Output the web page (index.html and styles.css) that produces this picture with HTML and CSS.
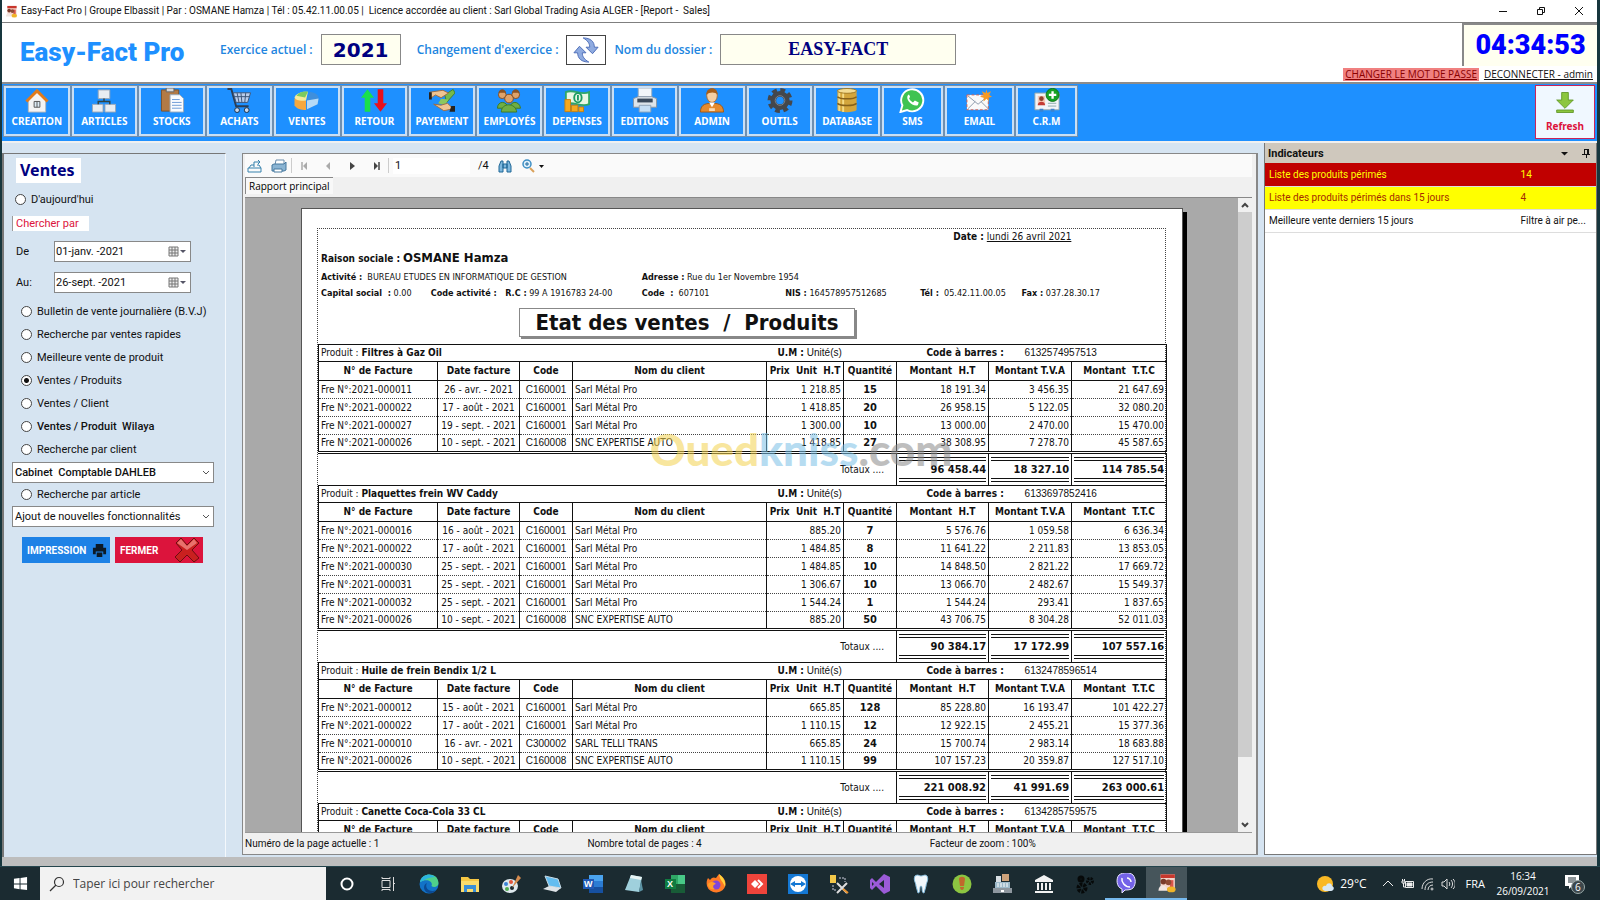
FILE: index.html
```html
<!DOCTYPE html>
<html lang="fr">
<head>
  <meta charset="UTF-8">
  <meta name="viewport" content="width=device-width, initial-scale=1.0">
  <title>Easy-Fact Pro</title>
  <link rel="stylesheet" href="styles.css">
</head>
<body>

  <div class="window">
    <header class="titlebar">
      <svg class="app-icon" viewBox="0 0 28 28"><path d="M5 2h20v20H5z" fill="#f5d5cb"/><path d="M5 2h20v5H5z" fill="#c8372d"/><path d="M18 10h5v10h-5z" fill="#d9564a"/><circle cx="9" cy="12" r="4" fill="#7a3b2a"/><circle cx="16" cy="13" r="4" fill="#8f4b35"/><path d="M2 25c0-10 12-10 13 0z" fill="#f2e6e2"/><ellipse cx="20" cy="23" rx="6" ry="4" fill="#f0b429"/></svg>
      <h1>Easy-Fact Pro | Groupe Elbassit | Par : OSMANE Hamza | Tél : 05.42.11.00.05 |&nbsp; Licence accordée au client : Sarl Global Trading Asia ALGER - [Report -&nbsp; Sales]</h1>
      <div class="window-buttons">
        <button type="button" aria-label="Réduire"><svg viewBox="0 0 10 10"><path d="M1 5.500h8" stroke="#111"/></svg></button>
        <button type="button" aria-label="Restaurer"><svg viewBox="0 0 10 10" fill="none" stroke="#111"><path d="M1.500 3.500h5v5h-5zM3.500 3V1.500h5v5H7"/></svg></button>
        <button type="button" aria-label="Fermer"><svg viewBox="0 0 10 10"><path d="M1 1l8 8M9 1l-8 8" stroke="#111"/></svg></button>
      </div>
    </header>

    <section class="banner">
      <div class="brand">Easy-Fact Pro</div>
      <div class="banner-fields">
        <label for="exercice">Exercice actuel :</label>
        <input type="text" id="exercice" class="year" value="2021" readonly>
        <span class="change-label">Changement d'exercice :</span>
        <button type="button" class="swap" aria-label="Changement d'exercice">
          <svg viewBox="0 0 28 28" fill="#8fabe0" stroke="#4a6ab5"><path d="M11 1c8 0 12 4 12 10h4l-6 7-7-7h4c0-4-2-7-7-10z"/><path d="M17 27c-8 0-12-4-12-10H1l6-7 7 7h-4c0 4 2 7 7 10z"/></svg>
        </button>
        <label for="dossier">Nom du dossier :</label>
        <input type="text" id="dossier" class="folder" value="EASY-FACT" readonly>
      </div>
      <div class="session">
        <div class="clock">04:34:53</div>
        <div class="session-links">
          <a href="#" class="password">CHANGER LE MOT DE PASSE</a>
          <a href="#">DECONNECTER - admin</a>
        </div>
      </div>
    </section>

    <nav class="ribbon">
      <div class="ribbon-items">
        <button type="button"><svg viewBox="0 0 26 26"><path d="M4 12v13h18V12l-9-9z" fill="#f4f4f4" stroke="#b9b9b9"/><path d="M2 14L13 3l11 11" fill="none" stroke="#e07b1c" stroke-width="3"/><path d="M10 14h6v6h-6zM13 14v6" fill="#dcebf5" stroke="#555"/></svg>CREATION</button>
        <button type="button"><svg viewBox="0 0 26 26" fill="#e9edf2" stroke="#9aa8b8"><path d="M7 2h12v9H7zM1 17h11v8H1zM14 17h11v8H14z"/><path d="M13 11v3M7 17v-3h12v3" fill="none" stroke="#344" stroke-width="1.500"/></svg>ARTICLES</button>
        <button type="button"><svg viewBox="0 0 26 26"><path d="M2 2h18v22H2z" fill="#b27a45" stroke="#7d5028"/><path d="M7 0h8v4H7z" fill="#d8d8d8" stroke="#666"/><path d="M11 7h10l4 4v14H11z" fill="#fafcff" stroke="#9ab"/><path d="M13 12h8M13 15h10M13 18h10M13 21h10" stroke="#6c9bd6"/></svg>STOCKS</button>
        <button type="button"><svg viewBox="0 0 26 26" fill="none"><path d="M1 1h4l5 18h13" stroke="#2c3e55" stroke-width="2"/><path d="M7 5h18l-3 10H10z" fill="#b9cdeb" stroke="#3c5578"/><path d="M11 5l2 10M15 5l1 10M20 5l-1 10M8 9h16" stroke="#3c5578"/><circle cx="11" cy="23" r="2.500" fill="#cbd9ee" stroke="#234"/><circle cx="21" cy="23" r="2.500" fill="#cbd9ee" stroke="#234"/></svg>ACHATS</button>
        <button type="button"><svg viewBox="0 0 26 26"><path d="M0 11v7c2 4 7 5 12 5V13z" fill="#f5a83f"/><path d="M0 10c1-4 8-7 14-6l-2 9c-5 1-11 0-12-3z" fill="#f8ea9a"/><path d="M2 8c3-4 8-5 12-4l-3 6z" fill="#7ccb5f"/><path d="M13 13l3-9c6 1 10 4 9 8l-1 5-11 5z" fill="#3f8fdc"/><path d="M13 13l12-2-1 6-11 5z" fill="#b5daf7"/></svg>VENTES</button>
        <button type="button"><svg viewBox="0 0 28 26"><path d="M7 1l7 9h-4v15H4V10H0z" fill="#19e04c"/><path d="M21 25l7-9h-4V1h-6v15h-4z" fill="#e8101c"/></svg>RETOUR</button>
        <button type="button"><svg viewBox="0 0 28 26"><path d="M17 7l9-6 2 4-9 10z" fill="#76b94c" stroke="#41802a"/><path d="M1 4l14-2 6 3-8 5-6-3-6 4z" fill="#efc493" stroke="#a06b3c"/><path d="M13 11l8 1-4 6-7-2z" fill="#8cc85f"/><path d="M5 17l8 1 7-2 6 6-10 2z" fill="#efc493" stroke="#a06b3c"/><path d="M0 4h3v8H0zM24 19h4v6h-6z" fill="#26221f"/></svg>PAYEMENT</button>
        <button type="button"><svg viewBox="0 0 26 26"><g fill="#6fae45" stroke="#3f7a22"><path d="M1 21c0-8 10-8 11 0zM14 21c0-8 10-8 11 0z"/><path d="M5 25c0-10 15-10 16 0z"/></g><g fill="#dea36a" stroke="#834d22"><circle cx="6" cy="7" r="4"/><circle cx="20" cy="7" r="4"/><circle cx="13" cy="11" r="4.500"/></g><path d="M2 5c1-5 7-5 8 0M16 5c1-5 7-5 8 0" fill="#8a5324"/></svg>EMPLOYÉS</button>
        <button type="button"><svg viewBox="0 0 28 26"><path d="M2 4c8-4 16 4 25 0v13c-9 4-17-4-25 0z" fill="#e8f7e4" stroke="#2fa66a" stroke-width="2"/><ellipse cx="15" cy="10" rx="4" ry="5" fill="none" stroke="#1b9b62" stroke-width="2"/><path d="M15 7v6" stroke="#1b9b62" stroke-width="2"/><path d="M1 12h6v13H1zM8 18h7v7H8zM16 20h5v5h-5z" fill="#f5a81f" stroke="#c77f0c"/></svg>DEPENSES</button>
        <button type="button"><svg viewBox="0 0 26 26"><path d="M6 0h14v12H6z" fill="#f2f6fa" stroke="#9fb0c2"/><path d="M1 11l5-2h14l5 2v9H1z" fill="#dde4ea" stroke="#8695a5"/><path d="M5 11h16v4H5z" fill="#3b4a5c"/><path d="M7 18h12v7H7z" fill="#c6dff5" stroke="#8fa4ba"/></svg>EDITIONS</button>
        <button type="button"><svg viewBox="0 0 26 26"><path d="M1 25c0-9 7-9 12-9s12 0 12 9z" fill="#e48a2e" stroke="#a65a12"/><ellipse cx="13" cy="8" rx="5.500" ry="7" fill="#f6cfa3" stroke="#a66b33"/><path d="M7 7c0-9 12-9 12 0-3-3-8-3-12 0z" fill="#a85f1b"/><path d="M10 15l3 5 3-5z" fill="#fff"/><path d="M10 21h6v3h-6z" fill="#f9d9b0"/></svg>ADMIN</button>
        <button type="button"><svg viewBox="0 0 26 26"><circle cx="13" cy="13" r="7" fill="none" stroke="#44474c" stroke-width="6"/><circle cx="13" cy="13" r="11" fill="none" stroke="#44474c" stroke-width="4" stroke-dasharray="5 3.640"/><circle cx="13" cy="13" r="5" fill="none" stroke="#7d8289"/></svg>OUTILS</button>
        <button type="button"><svg viewBox="0 0 26 26"><path d="M3 3v20c3 3 17 3 20 0V3z" fill="#d3a53c"/><path d="M5 4v20M9 5v20" stroke="#f6dc86" stroke-width="2"/><path d="M3 9c3 3 17 3 20 0M3 16c3 3 17 3 20 0" fill="none" stroke="#86611a" stroke-width="1.500"/><ellipse cx="13" cy="3" rx="10" ry="2.500" fill="#f3dc93" stroke="#a07a25"/></svg>DATABASE</button>
        <button type="button" class="narrow"><svg viewBox="0 0 26 26"><path d="M1 25l2-7a11.500 11.500 0 1 1 5 5z" fill="#3fc351" stroke="#fff" stroke-width="2"/><path d="M9 7c-4 5 5 13 10 11l1-3-4-2-2 2c-2-1-3-2-4-4l1-2-1-2z" fill="#fff"/></svg>SMS</button>
        <button type="button" class="wide"><svg viewBox="0 0 28 26"><path d="M1 7h23v16H1z" fill="#fafafa" stroke="#d45d4c" stroke-dasharray="3 2"/><path d="M2 8l11 9L24 8M2 22l8-8M24 22l-8-8" fill="none" stroke="#8795a8"/><path d="M22 1l1 4 4-2-2 4 3 2-4 1 1 4-3-3-3 3v-4l-4-1 4-2-2-4 4 2z" fill="#f59a23"/></svg>EMAIL</button>
        <button type="button" class="narrow"><svg viewBox="0 0 28 26"><path d="M1 5h26v18H1z" fill="#f2f5f8" stroke="#9aa"/><path d="M4 8h8v10H4z" fill="#f6c9b4"/><circle cx="8" cy="11" r="2.500" fill="#93412d"/><path d="M4 18c0-5 8-5 8 0z" fill="#c43c35"/><path d="M15 16h9M15 19h9" stroke="#8aa"/><path d="M6 22h4v3H6zM18 22h4v3h-4z" fill="#3c83cf"/><circle cx="20" cy="7" r="7" fill="#17a224" stroke="#0b7415"/><path d="M20 3v8M16 7h8" stroke="#fff" stroke-width="2.500"/></svg>C.R.M</button>
      </div>
      <button type="button" class="refresh"><svg viewBox="0 0 24 26"><path d="M8 1h8v9h6l-10 10L2 10h6z" fill="#8cc63e" stroke="#5d9322"/><path d="M2 22h20v3H2z" fill="#8cc63e" stroke="#5d9322"/></svg>Refresh</button>
    </nav>

    <main class="workspace">
      <form class="filters">
        <h2>Ventes</h2>
        <label class="choice today"><input type="radio" name="mode"> D'aujourd'hui</label>
        <div class="search-title">Chercher par</div>
        <div class="date-row">
          <label for="dateFrom">De</label>
          <div class="date-box">
            <input type="text" id="dateFrom" value="01-janv. -2021">
            <svg viewBox="0 0 18 12"><path d="M1 1h9v9H1zM1 4h9M1 7h9M4 1v9M7 1v9" fill="#eee" stroke="#777"/><path d="M12 4h6l-3 3z" fill="#556"/></svg>
          </div>
        </div>
        <div class="date-row">
          <label for="dateTo">Au:</label>
          <div class="date-box">
            <input type="text" id="dateTo" value="26-sept. -2021">
            <svg viewBox="0 0 18 12"><path d="M1 1h9v9H1zM1 4h9M1 7h9M4 1v9M7 1v9" fill="#eee" stroke="#777"/><path d="M12 4h6l-3 3z" fill="#556"/></svg>
          </div>
        </div>
        <div class="choices">
          <label class="choice"><input type="radio" name="mode"> Bulletin de vente journalière (B.V.J)</label>
          <label class="choice"><input type="radio" name="mode"> Recherche par ventes rapides</label>
          <label class="choice"><input type="radio" name="mode"> Meilleure vente de produit</label>
          <label class="choice"><input type="radio" name="mode" checked> Ventes / Produits</label>
          <label class="choice"><input type="radio" name="mode"> Ventes / Client</label>
          <label class="choice strong"><input type="radio" name="mode"> Ventes / Produit&nbsp; Wilaya</label>
          <label class="choice"><input type="radio" name="mode"> Recherche par client</label>
        </div>
        <select class="strong" aria-label="Client"><option>Cabinet&nbsp; Comptable DAHLEB</option></select>
        <label class="choice"><input type="radio" name="mode"> Recherche par article</label>
        <select aria-label="Article"><option>Ajout de nouvelles fonctionnalités</option></select>
        <div class="actions">
          <button type="button" class="print">IMPRESSION
            <svg viewBox="0 0 16 16"><path d="M4 1h8v4H4zM1 5h14v7h-3V9H4v3H1zM5 10h6v5H5z" fill="#0c1a26"/></svg></button>
          <button type="button" class="close">FERMER
            <svg viewBox="0 0 26 26"><path d="M2 6l5-5 6 7 7-7 5 5-7 7 7 8-5 4-7-7-7 7-5-5 7-7z" fill="#c9201f" stroke="#6d0d10"/><path d="M3 6l4-4 6 7 7-7 3 4-10 7z" fill="#e8716c"/></svg></button>
        </div>
      </form>

      <section class="viewer">
        <div class="viewer-toolbar">
          <button type="button" aria-label="Exporter"><svg viewBox="0 0 16 14"><path d="M2 9l2-3h3M1 9h13v4H1zM7 8V3h6M11 1l2 2-2 2M10 6h2l2 3" fill="none" stroke="#3682ad"/></svg></button>
          <button type="button" aria-label="Imprimer"><svg viewBox="0 0 16 14"><path d="M5 1h8v5H4z" fill="#fff" stroke="#6a8cab"/><path d="M1 6l2-1h10l2-2v8l-2 1H1z" fill="#8ab4d3" stroke="#47789e"/><path d="M3 10h8v3H3z" fill="#fff" stroke="#47789e"/></svg></button>
          <span class="sep"></span>
          <button type="button" aria-label="Première page"><svg viewBox="0 0 16 14"><path d="M6 3v8" stroke="#aaa" stroke-width="1.500"/><path d="M11 3v8L7 7z" fill="#aaa"/></svg></button>
          <button type="button" aria-label="Page précédente"><svg viewBox="0 0 16 14"><path d="M10 3v8L6 7z" fill="#aaa"/></svg></button>
          <button type="button" aria-label="Page suivante"><svg viewBox="0 0 16 14"><path d="M6 3v8l5-4z" fill="#444"/></svg></button>
          <button type="button" aria-label="Dernière page"><svg viewBox="0 0 16 14"><path d="M11 3v8" stroke="#444" stroke-width="1.500"/><path d="M6 3v8l4-4z" fill="#444"/></svg></button>
          <span class="sep"></span>
          <input type="text" value="1" aria-label="Page">
          <span>/4</span>
          <button type="button" aria-label="Rechercher"><svg viewBox="0 0 16 14"><path d="M2 13V7l2-5h2v11zM10 13V2h2l2 5v6zM6 5h4v4H6z" fill="#7db7dd" stroke="#1f6696"/></svg></button>
          <button type="button" class="zoom-button" aria-label="Zoom"><svg viewBox="0 0 24 14"><circle cx="6" cy="5" r="4" fill="#dff0fb" stroke="#3d8ec4" stroke-width="1.500"/><path d="M4 5h4M6 3v4" stroke="#1d6ba0"/><path d="M9 9l4 4" stroke="#d9a15a" stroke-width="2"/><path d="M18 6h5l-2.500 3z" fill="#111"/></svg></button>
        </div>
        <div class="viewer-tabs"><button type="button">Rapport principal</button></div>

        <div class="canvas">
          <div class="scroller">
            <article class="paper">
              <div class="page-frame">
                <p class="line date-line"><b>Date :</b> <u>lundi 26 avril 2021</u></p>
                <p class="line company"><b>Raison sociale :</b> <strong>OSMANE Hamza</strong></p>
                <div class="line details">
                  <span class="c1"><b>Activité :</b> &nbsp;BUREAU ETUDES EN INFORMATIQUE DE GESTION</span>
                  <span class="c3"><b>Adresse :</b> Rue du 1er Novembre 1954</span>
                </div>
                <div class="line details">
                  <span class="d1"><b>Capital social &nbsp;:</b> 0.00</span>
                  <span class="d2"><b>Code activité : &nbsp; R.C :</b> 99 A 1916783 24-00</span>
                  <span class="d3"><b>Code &nbsp;:</b> &nbsp;607101</span>
                  <span class="d4"><b>NIS :</b> 164578957512685</span>
                  <span class="d5"><b>Tél :</b> &nbsp;05.42.11.00.05</span>
                  <span class="d6"><b>Fax :</b> 037.28.30.17</span>
                </div>
                <h2>Etat des ventes &nbsp;/&nbsp; Produits</h2>

                <table class="report">
                  <colgroup><col class="w-facture"><col class="w-date"><col class="w-code"><col class="w-client"><col class="w-prix"><col class="w-qte"><col class="w-ht"><col class="w-tva"><col class="w-ttc"></colgroup>
                  <tbody>
                    <tr class="product"><td colspan="4">Produit : <b>Filtres à Gaz Oil</b></td><td colspan="2" class="unit"><b>U.M :</b> <span>Unité(s)</span></td><td colspan="3" class="barcode"><b>Code à barres :</b> <span>6132574957513</span></td></tr>
                    <tr class="heads"><th>N° de Facture</th><th>Date facture</th><th>Code</th><th>Nom du client</th><th>Prix&nbsp; Unit&nbsp; H.T</th><th>Quantité</th><th>Montant&nbsp; H.T</th><th>Montant T.V.A</th><th>Montant&nbsp; T.T.C</th></tr>
                    <tr><td>Fre N°:2021-000011</td><td>26 - avr. - 2021</td><td>C160001</td><td>Sarl Métal Pro</td><td>1 218.85</td><td>15</td><td>18 191.34</td><td>3 456.35</td><td>21 647.69</td></tr>
                    <tr><td>Fre N°:2021-000022</td><td>17 - août - 2021</td><td>C160001</td><td>Sarl Métal Pro</td><td>1 418.85</td><td>20</td><td>26 958.15</td><td>5 122.05</td><td>32 080.20</td></tr>
                    <tr><td>Fre N°:2021-000027</td><td>19 - sept. - 2021</td><td>C160001</td><td>Sarl Métal Pro</td><td>1 300.00</td><td>10</td><td>13 000.00</td><td>2 470.00</td><td>15 470.00</td></tr>
                    <tr class="last"><td>Fre N°:2021-000026</td><td>10 - sept. - 2021</td><td>C160008</td><td>SNC EXPERTISE AUTO</td><td>1 418.85</td><td>27</td><td>38 308.95</td><td>7 278.70</td><td>45 587.65</td></tr>
                    <tr class="totals"><td colspan="6">Totaux ....</td><td><span>96 458.44</span></td><td><span>18 327.10</span></td><td><span>114 785.54</span></td></tr>
                  </tbody>
                  <tbody>
                    <tr class="product"><td colspan="4">Produit : <b>Plaquettes frein WV Caddy</b></td><td colspan="2" class="unit"><b>U.M :</b> <span>Unité(s)</span></td><td colspan="3" class="barcode"><b>Code à barres :</b> <span>6133697852416</span></td></tr>
                    <tr class="heads"><th>N° de Facture</th><th>Date facture</th><th>Code</th><th>Nom du client</th><th>Prix&nbsp; Unit&nbsp; H.T</th><th>Quantité</th><th>Montant&nbsp; H.T</th><th>Montant T.V.A</th><th>Montant&nbsp; T.T.C</th></tr>
                    <tr><td>Fre N°:2021-000016</td><td>16 - août - 2021</td><td>C160001</td><td>Sarl Métal Pro</td><td>885.20</td><td>7</td><td>5 576.76</td><td>1 059.58</td><td>6 636.34</td></tr>
                    <tr><td>Fre N°:2021-000022</td><td>17 - août - 2021</td><td>C160001</td><td>Sarl Métal Pro</td><td>1 484.85</td><td>8</td><td>11 641.22</td><td>2 211.83</td><td>13 853.05</td></tr>
                    <tr><td>Fre N°:2021-000030</td><td>25 - sept. - 2021</td><td>C160001</td><td>Sarl Métal Pro</td><td>1 484.85</td><td>10</td><td>14 848.50</td><td>2 821.22</td><td>17 669.72</td></tr>
                    <tr><td>Fre N°:2021-000031</td><td>25 - sept. - 2021</td><td>C160001</td><td>Sarl Métal Pro</td><td>1 306.67</td><td>10</td><td>13 066.70</td><td>2 482.67</td><td>15 549.37</td></tr>
                    <tr><td>Fre N°:2021-000032</td><td>25 - sept. - 2021</td><td>C160001</td><td>Sarl Métal Pro</td><td>1 544.24</td><td>1</td><td>1 544.24</td><td>293.41</td><td>1 837.65</td></tr>
                    <tr class="last"><td>Fre N°:2021-000026</td><td>10 - sept. - 2021</td><td>C160008</td><td>SNC EXPERTISE AUTO</td><td>885.20</td><td>50</td><td>43 706.75</td><td>8 304.28</td><td>52 011.03</td></tr>
                    <tr class="totals"><td colspan="6">Totaux ....</td><td><span>90 384.17</span></td><td><span>17 172.99</span></td><td><span>107 557.16</span></td></tr>
                  </tbody>
                  <tbody>
                    <tr class="product"><td colspan="4">Produit : <b>Huile de frein Bendix 1/2 L</b></td><td colspan="2" class="unit"><b>U.M :</b> <span>Unité(s)</span></td><td colspan="3" class="barcode"><b>Code à barres :</b> <span>6132478596514</span></td></tr>
                    <tr class="heads"><th>N° de Facture</th><th>Date facture</th><th>Code</th><th>Nom du client</th><th>Prix&nbsp; Unit&nbsp; H.T</th><th>Quantité</th><th>Montant&nbsp; H.T</th><th>Montant T.V.A</th><th>Montant&nbsp; T.T.C</th></tr>
                    <tr><td>Fre N°:2021-000012</td><td>15 - août - 2021</td><td>C160001</td><td>Sarl Métal Pro</td><td>665.85</td><td>128</td><td>85 228.80</td><td>16 193.47</td><td>101 422.27</td></tr>
                    <tr><td>Fre N°:2021-000022</td><td>17 - août - 2021</td><td>C160001</td><td>Sarl Métal Pro</td><td>1 110.15</td><td>12</td><td>12 922.15</td><td>2 455.21</td><td>15 377.36</td></tr>
                    <tr><td>Fre N°:2021-000010</td><td>16 - avr. - 2021</td><td>C300002</td><td>SARL TELLI TRANS</td><td>665.85</td><td>24</td><td>15 700.74</td><td>2 983.14</td><td>18 683.88</td></tr>
                    <tr class="last"><td>Fre N°:2021-000026</td><td>10 - sept. - 2021</td><td>C160008</td><td>SNC EXPERTISE AUTO</td><td>1 110.15</td><td>99</td><td>107 157.23</td><td>20 359.87</td><td>127 517.10</td></tr>
                    <tr class="totals"><td colspan="6">Totaux ....</td><td><span>221 008.92</span></td><td><span>41 991.69</span></td><td><span>263 000.61</span></td></tr>
                  </tbody>
                  <tbody>
                    <tr class="product"><td colspan="4">Produit : <b>Canette Coca-Cola 33 CL</b></td><td colspan="2" class="unit"><b>U.M :</b> <span>Unité(s)</span></td><td colspan="3" class="barcode"><b>Code à barres :</b> <span>6134285759575</span></td></tr>
                    <tr class="heads"><th>N° de Facture</th><th>Date facture</th><th>Code</th><th>Nom du client</th><th>Prix&nbsp; Unit&nbsp; H.T</th><th>Quantité</th><th>Montant&nbsp; H.T</th><th>Montant T.V.A</th><th>Montant&nbsp; T.T.C</th></tr>
                  </tbody>
                </table>
              </div>
            </article>
          </div>
          <div class="scrollbar">
            <svg viewBox="0 0 14 14"><path d="M4 9l3-3 3 3" fill="none" stroke="#444" stroke-width="2"/></svg>
            <div class="thumb"></div>
            <svg viewBox="0 0 14 14"><path d="M4 5l3 3 3-3" fill="none" stroke="#444" stroke-width="2"/></svg>
          </div>
        </div>
        <footer class="status">
          <span>Numéro de la page actuelle : 1</span>
          <span>Nombre total de pages : 4</span>
          <span>Facteur de zoom : 100%</span>
        </footer>
      </section>

      <aside class="indicators">
        <div class="indicators-head">
          <h2>Indicateurs</h2>
          <svg viewBox="0 0 32 12"><path d="M1 5h7L4.500 8.500z" fill="#111"/><path d="M24.500 2v5M22 7.500h8M24.500 2.500h4M28.500 2v5M27.500 2v5M26.500 7v4" stroke="#111" fill="none"/></svg>
        </div>
        <table>
          <tr class="expired"><td>Liste des produits périmés</td><td>14</td></tr>
          <tr class="expiring"><td>Liste des produits périmés dans 15 jours</td><td>4</td></tr>
          <tr><td>Meilleure vente derniers 15 jours</td><td>Filtre à air pe...</td></tr>
        </table>
      </aside>
    </main>
    <div class="watermark"><span class="wm-yellow">Oued</span><span class="wm-blue">kniss</span><span class="wm-grey">.com</span></div>
  </div>

  <footer class="taskbar">
    <button type="button" class="start" aria-label="Démarrer"><svg viewBox="0 0 16 16" fill="#fff"><path d="M1 3l6-1v6H1zM8 2l7-1v7H8zM1 9h6v5l-6-1zM8 9h7v6l-7-1z"/></svg></button>
    <div class="search">
      <svg viewBox="0 0 16 16" fill="none" stroke="#333" stroke-width="1.200"><circle cx="10" cy="6" r="4.500"/><path d="M7 9l-6 6"/></svg>
      <input type="text" placeholder="Taper ici pour rechercher" aria-label="Rechercher">
    </div>
    <div class="apps">
      <button type="button" aria-label="Cortana"><svg viewBox="0 0 20 20"><circle cx="10" cy="10" r="5.500" fill="none" stroke="#fff" stroke-width="2"/></svg></button>
      <button type="button" aria-label="Vue des tâches"><svg viewBox="0 0 20 20" fill="none" stroke="#ddd"><path d="M4 6.500h8v7H4zM4 3v1.500h8V3M4 17v-1.500h8V17M15.500 3v14M15 9.500h2"/></svg></button>
      <button type="button" aria-label="Edge"><svg viewBox="0 0 20 20"><circle cx="10" cy="10" r="9.500" fill="#1273c8"/><path d="M1 8C3-2 19-2 19.500 9c0 4-5 5-7 3 2-5-5-8-11.500-4z" fill="#4fd08a"/><path d="M1 8c2-8 11-9 15-5C8 3 5 7 1 8z" fill="#2bb3e0"/><path d="M8 9c-3 5 3 10 9 7-3 5-11 4-12-2 0-3 1-4 3-5z" fill="#0b4a94"/></svg></button>
      <button type="button" aria-label="Explorateur"><svg viewBox="0 0 20 20"><path d="M1 3h7l2 2h9v13H1z" fill="#f7c844"/><path d="M1 7h18v11H1z" fill="#fbdc6d"/><path d="M4 11h12v7h-3v-3H7v3H4z" fill="#3a8fd8"/></svg></button>
      <button type="button" aria-label="Paint"><svg viewBox="0 0 20 20"><ellipse cx="9" cy="12" rx="8" ry="7" fill="#dfe9ee"/><circle cx="5" cy="10" r="2" fill="#3d84d6"/><circle cx="10" cy="8" r="2" fill="#e1563c"/><circle cx="6" cy="15" r="2" fill="#51ad4f"/><circle cx="11" cy="14" r="2" fill="#1c292e"/><path d="M11 14l6-13 3 3z" fill="#d58b4f"/></svg></button>
      <button type="button" aria-label="Bureau"><svg viewBox="0 0 20 20"><path d="M3 2l13 3 3 9-12-2z" fill="#64bdf0" stroke="#c7dbe6"/><path d="M1 15l6-3 12 2-5 4z" fill="#dfe4e8"/></svg></button>
      <button type="button" aria-label="Word"><svg viewBox="0 0 20 20"><path d="M6 1h14v6H6z" fill="#4aa3ee"/><path d="M6 7h14v6H6z" fill="#2b7cd3"/><path d="M6 13h14v6H6z" fill="#1650a0"/><path d="M0 5h11v10H0z" fill="#2059b5"/><text x="1" y="13" font-size="9" font-weight="700" fill="#fff" font-family="Liberation Sans, sans-serif">W</text></svg></button>
      <button type="button" aria-label="Bloc-notes"><svg viewBox="0 0 20 20"><path d="M7 1l11 2-3 15-14-2z" fill="#9fd0dc"/><path d="M7 1l11 2-1 3-11-2z" fill="#e8f4f4"/><path d="M15 18l2-12 2 10z" fill="#5b93a4"/></svg></button>
      <button type="button" aria-label="Excel"><svg viewBox="0 0 20 20"><path d="M6 1h14v9H6z" fill="#2fa866"/><path d="M6 10h14v9H6z" fill="#185c37"/><path d="M13 1h7v9h-7z" fill="#48c987"/><path d="M0 5h11v10H0z" fill="#107c41"/><text x="2" y="13" font-size="9" font-weight="700" fill="#fff" font-family="Liberation Sans, sans-serif">X</text></svg></button>
      <button type="button" aria-label="Firefox"><svg viewBox="0 0 20 20"><path d="M2 4l2 2c2-3 4-3 6-2l3-4c4 3 7 6 6.500 11A9.500 9 0 0 1 1 12C0 8 1 6 2 4z" fill="#ff7a24"/><path d="M13 0c5 4 7 8 6 13-2-6-5-6-6-13z" fill="#ffd43c"/><circle cx="10" cy="11" r="4.500" fill="#8046d8"/><path d="M2 10c3-3 6-2 8 0-3 0-4 4-1 5-4 1-7-1-7-5z" fill="#ff9f2a"/></svg></button>
      <button type="button" aria-label="AnyDesk"><svg viewBox="0 0 20 20"><path d="M0 0h20v20H0z" fill="#ef443b"/><path d="M8 6l4 4-4 4-4-4z" fill="#fff"/><path d="M11 6l4 4-4 4" fill="none" stroke="#fff" stroke-width="2"/></svg></button>
      <button type="button" aria-label="TeamViewer"><svg viewBox="0 0 20 20"><path d="M0 0h20v20H0z" fill="#1478d4"/><circle cx="10" cy="10" r="8" fill="#fff"/><path d="M2 10l5-3v2h6V7l5 3-5 3v-2H7v2z" fill="#1478d4"/></svg></button>
      <button type="button" aria-label="SQL Server"><svg viewBox="0 0 20 20"><path d="M1 1h6v8H1z" fill="#f2c749"/><path d="M10 4h6v4M4 11v5h4" stroke="#ccd" stroke-dasharray="2 1" fill="none"/><path d="M8 9l10 10M18 9L8 19" stroke="#ddd" stroke-width="2"/><path d="M14 15l5 4" stroke="#e7912c" stroke-width="2"/></svg></button>
      <button type="button" aria-label="Visual Studio"><svg viewBox="0 0 20 20"><path d="M14 0l6 3v14l-6 3-8-8-4 4-2-2V6l2-2 4 4zM14 6l-5 4 5 4zM2 8v4l2-2z" fill="#9b5bd8" fill-rule="evenodd"/></svg></button>
      <button type="button" aria-label="Dentiste"><svg viewBox="0 0 20 20"><path d="M4 2c3-2 4 0 6 0s4-2 6 0c2 4-1 7-1 10l-2 7c-3 0-1-7-3-7s0 7-3 7L5 12C5 9 2 6 4 2z" fill="#f2f7fb" stroke="#86bfe0"/></svg></button>
      <button type="button" aria-label="Alerte"><svg viewBox="0 0 20 20"><circle cx="10" cy="10" r="9.500" fill="#8cc541"/><path d="M7 5c0-3 6-3 6 0l-1 7H8z" fill="#c0672c"/><path d="M8 13h4c0 4-4 4-4 0z" fill="#c0672c"/></svg></button>
      <button type="button" aria-label="Caisse"><svg viewBox="0 0 20 20"><path d="M3 2h5v6H3z" fill="#d9dfe4"/><path d="M9 0h7v7H9z" fill="#cda27a"/><path d="M2 8h15v6H2z" fill="#9cb9c9"/><path d="M0 14h19v5H0z" fill="#8e979f"/><path d="M4 10h11M4 12h11" stroke="#fff" stroke-dasharray="2 1"/><path d="M8 16h3v2H8z" fill="#fff"/></svg></button>
      <button type="button" aria-label="Banque"><svg viewBox="0 0 20 20" fill="#f2f2f2"><path d="M10 1l9 5v2H1V6zM3 9h2v7H3zM7 9h2v7H7zM11 9h2v7h-2zM15 9h2v7h-2zM1 17h18v2H1z"/></svg></button>
      <button type="button" aria-label="Services"><svg viewBox="0 0 20 20" fill="none" stroke="#060909"><circle cx="7" cy="14" r="3.500" stroke-width="4" stroke-dasharray="2.500 1"/><circle cx="6" cy="5" r="2" stroke-width="3"/><circle cx="15" cy="7" r="2.500" stroke-width="3" stroke-dasharray="2 1"/></svg></button>
      <button type="button" class="running" aria-label="Viber"><svg viewBox="0 0 20 20"><path d="M3 2c4-3 11-3 14 0 3 4 3 9 0 13-2 2-6 2-8 2l-3 3v-4c-6-2-6-11-3-14z" fill="#7463e8" stroke="#e9e6ff"/><path d="M6 5c-1 4 3 9 8 9M11 5c2 0 4 2 4 4" fill="none" stroke="#fff" stroke-width="1.500"/></svg></button>
      <button type="button" class="running active" aria-label="Easy-Fact Pro"><svg viewBox="0 0 28 28"><path d="M5 2h20v20H5z" fill="#f5d5cb"/><path d="M5 2h20v5H5z" fill="#c8372d"/><path d="M18 10h5v10h-5z" fill="#d9564a"/><circle cx="9" cy="12" r="4" fill="#7a3b2a"/><circle cx="16" cy="13" r="4" fill="#8f4b35"/><path d="M2 25c0-10 12-10 13 0z" fill="#f2e6e2"/><ellipse cx="20" cy="23" rx="6" ry="4" fill="#f0b429"/></svg></button>
    </div>
    <div class="tray">
      <svg class="weather" viewBox="0 0 18 18"><circle cx="9" cy="9" r="8" fill="#f9b825"/><path d="M7 15c-2-3 1-5 3-4 1-4 6-3 6 0 3 1 2 5-1 5H9z" fill="#d8e8f5"/></svg>
      <span class="temp">29°C</span>
      <svg viewBox="0 0 14 14" fill="none" stroke="#eee"><path d="M2 9l5-5 5 5"/></svg>
      <svg viewBox="0 0 14 14" fill="none" stroke="#eee"><path d="M4.500 4.500h8v6h-8z"/><path d="M6 6h5v3H6z" fill="#eee"/><path d="M1 4h3v2H1zM1.500 2v2M3.500 2v2M2.500 6v4h2"/></svg>
      <svg viewBox="0 0 14 14" fill="none" stroke="#ddd"><path d="M1 12C1 6 6 1 12 2M4 13c0-5 3-8 8-8M7 13c0-3 2-5 5-5"/><circle cx="11" cy="12" r="1"/></svg>
      <svg viewBox="0 0 14 14" fill="none" stroke="#ddd"><path d="M1 5h2l3-3v10L3 9H1zM8 5c1 1 1 3 0 4M10 3c2 2 2 6 0 8M12 2c3 3 3 7 0 10"/></svg>
      <span class="lang">FRA</span>
      <time><span>16:34</span><span>26/09/2021</span></time>
      <button type="button" aria-label="Notifications" class="notif"><svg viewBox="0 0 22 22"><path d="M1 2h14v11H8l-3 3v-3H1z" fill="#fff"/><path d="M4 5h8M4 7h8M4 9h8" stroke="#1b2b31"/><circle cx="14" cy="14" r="6.500" fill="#3d474b" stroke="#9aa"/><text x="11" y="18" font-size="10" fill="#fff" font-family="Open Sans, sans-serif">6</text></svg></button>
    </div>
  </footer>

</body>
</html>
```
FILE: styles.css
```css
* {
  box-sizing: border-box;
}

body {
  margin: 0;
  height: 100vh;
  display: flex;
  flex-direction: column;
  overflow: hidden;
  background: #17363d;
  color: #111;
  font-family: Roboto, "Open Sans", sans-serif;
  font-size: 11px;
}

h1, h2, p {
  margin: 0;
}

button {
  padding: 0;
  border: none;
  background: none;
  font-family: inherit;
  cursor: pointer;
}

input, select {
  font-family: inherit;
  font-size: inherit;
  color: inherit;
}

svg {
  display: block;
  flex: none;
}

.window {
  position: relative;
  flex: 1;
  min-height: 0;
  margin: 0 3px 0 2px;
  display: flex;
  flex-direction: column;
  background: #d6e4f1;
  border-bottom: 9px solid #bdbdbd;
}

/* title bar */
.titlebar {
  height: 23px;
  display: flex;
  align-items: center;
  gap: 3px;
  padding: 0 13px 0 3px;
  background: #fff;
  border-bottom: 1px solid #7f7f7f;
}

.titlebar h1 {
  flex: 1;
  font-size: 10px;
  font-weight: 400;
  line-height: 20px;
}

.app-icon {
  width: 13px;
  height: 13px;
}

.window-buttons {
  display: flex;
  gap: 28px;
}

.window-buttons svg {
  width: 10px;
  height: 10px;
}

/* banner */
.banner {
  height: 61px;
  display: flex;
  background: #fff;
  border-bottom: 2px solid #8c8c8c;
}

.brand {
  width: 218px;
  padding-left: 18px;
  color: #1e90ff;
  font: 900 26px/58px Roboto, sans-serif;
  white-space: nowrap;
}

.banner-fields {
  flex: 1;
  display: flex;
  align-items: center;
  gap: 8px;
  padding-bottom: 6px;
  color: #2185e0;
  font-family: "Open Sans", sans-serif;
  font-size: 12px;
  font-weight: 600;
  white-space: nowrap;
}

.change-label {
  margin-left: 8px;
}

.year, .folder {
  height: 31px;
  border: 1px solid #888;
  background: #fffff0;
  color: #000080;
  text-align: center;
  font-weight: 700;
}

.year {
  width: 80px;
  font-family: "DejaVu Sans", sans-serif;
  font-size: 20px;
}

.folder {
  width: 236px;
  font-family: "Liberation Serif", serif;
  font-size: 18px;
}

.swap {
  width: 40px;
  height: 30px;
  border: 1px solid #444;
  display: flex;
  justify-content: center;
  align-items: center;
}

.swap svg {
  width: 26px;
  height: 26px;
}

.session {
  display: flex;
  flex-direction: column;
  align-items: flex-end;
  gap: 2px;
}

.clock {
  width: 135px;
  height: 43px;
  border: 2px solid #888;
  border-width: 2px 0 0 2px;
  background: #fffff0;
  color: #0000ff;
  text-align: center;
  font: 900 27px/40px Roboto, sans-serif;
}

.session-links {
  display: flex;
  gap: 3px;
  padding-right: 2px;
  font: 10px/13px "Open Sans", sans-serif;
}

.session-links a {
  color: #111;
  padding: 0 2px;
}

.session-links .password {
  background: #f08080;
  color: #8b0000;
}

/* ribbon */
.ribbon {
  height: 57px;
  display: flex;
  justify-content: space-between;
  padding: 2px 2px 5px;
  background: #1e90ff;
}

.ribbon-items {
  width: calc(67% + 7px);
  display: flex;
  gap: 2px;
}

.ribbon-items button {
  flex: 67;
  min-width: 0;
  display: flex;
  flex-direction: column;
  align-items: center;
  border: 2px solid #c9dff5;
  outline: 1px solid #6f8fb0;
  color: #fff;
  font-family: "Noto Sans", sans-serif;
  font-size: 10px;
  font-weight: 700;
  line-height: 14px;
}

.ribbon-items .narrow {
  flex: 62;
}

.ribbon-items .wide {
  flex: 71;
}

.ribbon-items svg {
  height: 25px;
  width: 26px;
  margin-bottom: 1px;
}

.refresh {
  width: 60px;
  height: 54px;
  margin-top: -1px;
  display: flex;
  flex-direction: column;
  align-items: center;
  gap: 4px;
  padding-top: 4px;
  border: 1px solid #c8235a;
  background: #f0f8ff;
  color: #dc143c;
  font-family: "Noto Sans", sans-serif;
  font-size: 10px;
  font-weight: 700;
}

.refresh svg {
  width: 20px;
  height: 25px;
}

/* workspace */
.workspace {
  flex: 1;
  min-height: 0;
  display: flex;
  border-top: 2px solid #f0f0f0;
}

.filters {
  width: 224px;
  margin-top: 10px;
  padding: 4px 11px 0 8px;
  display: flex;
  flex-direction: column;
  border-top: 1px solid #777;
  border-left: 2px solid #777;
  border-right: 1px solid #f4f8fc;
}

.filters h2 {
  align-self: flex-start;
  margin-left: 4px;
  padding: 0 6px 0 4px;
  background: #fff;
  color: #000080;
  font-family: "Noto Sans", sans-serif;
  font-size: 16px;
  line-height: 25px;
}

.choice {
  height: 23px;
  display: flex;
  align-items: center;
  gap: 5px;
  padding-left: 9px;
  white-space: nowrap;
}

.choice.today {
  height: 33px;
  padding-left: 3px;
}

.strong {
  font-weight: 500;
}

.choice input {
  appearance: none;
  width: 11px;
  height: 11px;
  margin: 0;
  border: 1px solid #444;
  border-radius: 50%;
  background: #fff;
}

.choice input:checked {
  background: radial-gradient(#111 0 2px, #fff 3px);
}

.search-title {
  align-self: flex-start;
  width: 77px;
  padding-left: 3px;
  border-left: 1px solid #999;
  background: #fff;
  color: #dc143c;
  line-height: 15px;
}

.date-row {
  display: flex;
  align-items: center;
  margin-top: 10px;
  padding-left: 4px;
}

.date-row label {
  width: 38px;
}

.date-box {
  width: 137px;
  height: 21px;
  display: flex;
  align-items: center;
  padding: 0 4px 0 1px;
  border: 1px solid #888;
  background: #fff;
}

.date-box input {
  flex: 1;
  min-width: 0;
  padding: 0;
  border: none;
}

.date-box svg {
  width: 18px;
  height: 12px;
}

.choices {
  margin: 7px 0 1px;
}

.filters select {
  height: 21px;
  padding: 0 20px 0 2px;
  border: 1px solid #888;
  border-radius: 0;
  appearance: none;
  background: #fff url("data:image/svg+xml,%3Csvg xmlns='http://www.w3.org/2000/svg' width='8' height='6'%3E%3Cpath d='M1 1l3 3 3-3' fill='none' stroke='%23555'/%3E%3C/svg%3E") no-repeat right 3px center;
}

.actions {
  display: flex;
  gap: 5px;
  margin-top: 10px;
  padding-left: 10px;
}

.actions button {
  width: 88px;
  height: 26px;
  display: flex;
  align-items: center;
  justify-content: space-between;
  padding: 0 3px 0 5px;
  color: #fff;
  font-size: 10px;
  font-weight: 700;
}

.print {
  background: #1e82e6;
}

.print svg {
  width: 15px;
  height: 15px;
}

.close {
  background: #dc143c;
}

.close svg {
  width: 26px;
  height: 26px;
}

/* report viewer */
.viewer {
  flex: 1;
  min-width: 0;
  margin: 10px 0 2px 16px;
  padding: 0 4px 0 2px;
  display: flex;
  flex-direction: column;
  border: 1px solid #888;
  border-right-width: 2px;
  background: #f0f0f0;
}

.viewer-toolbar {
  height: 23px;
  display: flex;
  align-items: center;
  gap: 8px;
  padding-left: 2px;
  background: #fafafa;
}

.viewer-toolbar svg {
  width: 16px;
  height: 14px;
}

.viewer-toolbar .zoom-button svg {
  width: 24px;
}

.viewer-toolbar .sep {
  width: 1px;
  height: 15px;
  margin: 0 -4px;
  background: #ccc;
}

.viewer-toolbar input {
  width: 77px;
  height: 16px;
  padding: 0 2px;
  border: none;
  background: #fff;
  font-size: 11px;
}

.viewer-tabs {
  height: 20px;
  display: flex;
}

.viewer-tabs button {
  height: 17px;
  padding: 0 3px;
  border: 1px solid #888;
  border-width: 1px 0 0 1px;
  background: #f8f8f8;
  font: 10px "Open Sans", sans-serif;
}

.canvas {
  flex: 1;
  min-height: 0;
  display: flex;
  border-top: 1px solid #888;
}

.scroller {
  flex: 1;
  min-width: 0;
  overflow: hidden;
  padding: 10px 55px 0 56px;
  background: #a9a9a9;
}

.paper {
  padding: 19px 16px 200px 15px;
  border: 1px solid #555;
  background: #fff;
  box-shadow: 4px 4px 0 #000;
}

.page-frame {
  border: 1px dotted #444;
  font-family: "DejaVu Sans Condensed", "DejaVu Sans", sans-serif;
  font-size: 10px;
}

.line {
  height: 16px;
  padding-left: 3px;
  line-height: 16px;
  white-space: nowrap;
}

.date-line {
  padding-left: 75%;
}

.company {
  height: 24px;
  line-height: 26px;
}

.company strong {
  font-size: 13px;
}

.details {
  display: flex;
  font-size: 9px;
}

.c1 { width: 38%; }
.d1 { width: 13%; }
.d2 { width: 25%; }
.d3 { width: 17%; }
.d4 { width: 16%; }
.d5 { width: 12%; }

.page-frame h2 {
  width: 336px;
  margin: 7px auto 7px 201px;
  border: 1px solid #888;
  box-shadow: 2px 2px 0 #888;
  text-align: center;
  font-size: 22px;
  line-height: 27px;
}

.report {
  width: 100%;
  table-layout: fixed;
  border-collapse: collapse;
}

.w-facture { width: 119px; }
.w-date { width: 82px; }
.w-code { width: 53px; }
.w-client { width: 194px; }
.w-prix { width: 77px; }
.w-qte { width: 53px; }
.w-ht { width: 92px; }
.w-tva { width: 83px; }
.w-ttc { width: 95px; }

.report td, .report th {
  height: 18px;
  padding: 0 2px;
  border: 1px solid #111;
  border-top: 1px dotted #444;
  border-bottom: 1px dotted #444;
  line-height: 14px;
  white-space: nowrap;
}

.report .heads th {
  height: 19px;
  padding: 0;
  border: 1px solid #111;
}

.report .product td {
  height: 17px;
  border: 1px solid #111;
  border-left: none;
  border-right: none;
}

.report .product td:first-child {
  border-left: 1px solid #111;
}

.report .product td:last-child {
  border-right: 1px solid #111;
}

.report .product .unit {
  padding-left: 11px;
}

.report .product .barcode {
  padding-left: 30px;
}

.product span {
  font-family: "Liberation Sans", sans-serif;
}

.barcode span {
  padding-left: 18px;
}

.report td:nth-child(2) {
  text-align: center;
}

.report td:nth-child(3) {
  text-align: center;
  font-family: "Liberation Sans", sans-serif;
}

.report td:nth-child(n+5) {
  text-align: right;
}

.report td:nth-child(6) {
  text-align: center;
  font-weight: 700;
  font-size: 11px;
}

.report .product td {
  text-align: left;
  font-family: inherit;
}

.report .last td {
  border-bottom: 3px double #111;
}

.report .totals td {
  height: 33px;
  padding: 3px 2px;
  border: 1px solid #111;
  text-align: right;
  font-family: inherit;
}

.report .totals td:first-child {
  padding-right: 12px;
  border: none;
}

.totals span {
  display: block;
  border: 4px double #111;
  border-width: 4px 0;
  line-height: 17px;
  font-size: 11px;
  font-weight: 700;
}

.scrollbar {
  width: 14px;
  display: flex;
  flex-direction: column;
  background: #f0f0f0;
}

.scrollbar svg {
  width: 14px;
  height: 14px;
}

.scrollbar .thumb {
  height: 545px;
  margin-bottom: auto;
  background: #cdcdcd;
}

.status {
  height: 22px;
  display: flex;
  align-items: center;
  border-top: 1px solid #999;
}

.status span {
  flex: none;
  width: 34%;
  font-size: 10px;
}

/* indicators */
.indicators {
  width: 333px;
  margin: 0 0 2px 6px;
  border: 1px solid #777;
  border-top: none;
  background: #fff;
}

.indicators-head {
  height: 20px;
  display: flex;
  align-items: center;
  justify-content: space-between;
  padding: 0 4px 0 3px;
  background: #cfc8bd;
}

.indicators-head h2 {
  font-size: 11px;
}

.indicators-head svg {
  width: 32px;
  height: 12px;
}

.indicators table {
  width: 100%;
  border-collapse: collapse;
  font-size: 10px;
}

.indicators td {
  height: 23px;
  padding: 0 4px;
  border-bottom: 1px solid #ddd;
  white-space: nowrap;
}

.indicators td:first-child {
  width: 76%;
}

.expired {
  background: #c00000;
  color: #ffff00;
}

.expiring {
  background: #ffff00;
  color: #a52a00;
}

/* site mark laid over the report */
.watermark {
  position: absolute;
  left: 648px;
  top: 422px;
  opacity: 0.55;
  font: 900 44px/54px Lato, sans-serif;
  pointer-events: none;
}

.wm-yellow { color: #f3d24f; }
.wm-blue { color: #7cc0e6; }
.wm-grey { color: #8a8a8a; }

/* taskbar */
.taskbar {
  height: 34px;
  display: flex;
  align-items: stretch;
  background: #1b2b31;
  border-top: 1px solid #24454d;
  color: #fff;
  font-family: "Open Sans", sans-serif;
}

.start {
  width: 40px;
  display: flex;
  justify-content: center;
  align-items: center;
}

.start svg {
  width: 15px;
  height: 15px;
}

.search {
  width: 286px;
  display: flex;
  align-items: center;
  gap: 8px;
  padding-left: 9px;
  background: #f2f2f2;
}

.search svg {
  width: 16px;
  height: 16px;
}

.search input {
  flex: 1;
  min-width: 0;
  padding: 0;
  border: none;
  background: none;
  font-size: 12px;
}

.search input::placeholder {
  color: #444;
}

.apps {
  flex: 1;
  display: flex;
}

.apps button {
  width: 41px;
  display: flex;
  justify-content: center;
  align-items: center;
}

.apps svg {
  width: 20px;
  height: 20px;
}

.apps .running {
  border-bottom: 2px solid #76b9ed;
}

.apps .active {
  background: #46555b;
}

.tray {
  display: flex;
  align-items: center;
  gap: 6px;
  padding-right: 14px;
}

.tray svg {
  width: 14px;
  height: 14px;
}

.tray .weather {
  width: 18px;
  height: 18px;
}

.tray .temp {
  margin-right: 8px;
  font-size: 12px;
}

.tray .lang {
  margin: 0 5px;
}

.tray time {
  width: 54px;
  margin-right: 8px;
  display: flex;
  flex-direction: column;
  align-items: center;
  font-size: 10px;
  line-height: 15px;
}

.tray .notif svg {
  width: 22px;
  height: 22px;
}
```
